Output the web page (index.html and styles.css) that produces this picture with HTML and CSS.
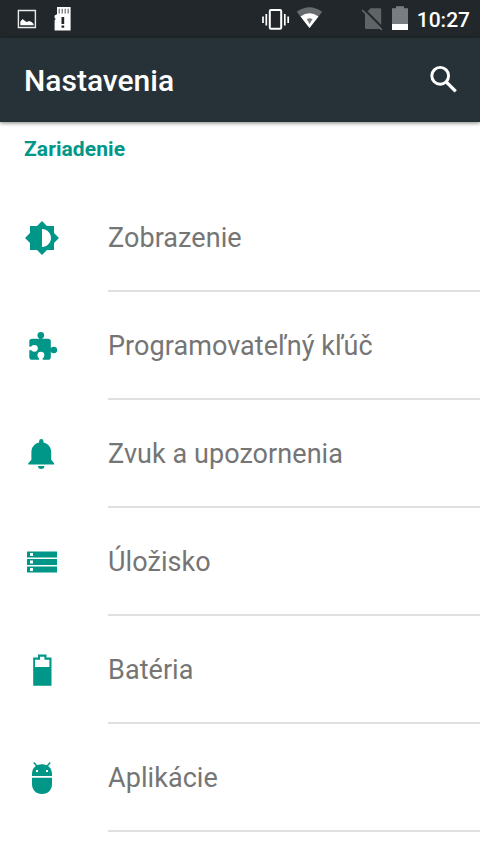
FILE: index.html
```html
<!DOCTYPE html>
<html lang="sk">
<head>
<meta charset="utf-8">
<title>Nastavenia</title>
<link rel="stylesheet" href="styles.css">
</head>
<body>
<div class="status">
  <svg class="status-left" width="84" height="38" viewBox="0 0 84 38">
    <path d="M18.4 10.5h17v17h-17z" fill="none" stroke="#e9eaea" stroke-width="1.4"/>
    <path d="M20.3 25.3v-3.600l2.200-2.600 1.600 1.200 2.400 1.700 2.700-1 2.400 1 2 2v1.300z" fill="#fff"/>
    <path d="M57 7h13.600v23.600H54.600V20.300l1.200-1.300-1.200-1V15.500l2.400-1.300z" fill="#fff"/>
    <path d="M59.200 8.700v4.800M62.200 8.700v4.800M65.200 8.700v4.800M68.200 8.700v4.800" stroke="#697074" stroke-width="1.200"/>
    <path d="M61.500 17h2.700v7h-2.700zM61.500 25.500h2.700v2.300h-2.700z" fill="#21272b"/>
  </svg>
  <div class="status-right">
    <svg width="154" height="38" viewBox="256 0 154 38">
      <rect x="269.800" y="10" width="11.400" height="18.800" rx="1.200" fill="none" stroke="#fff" stroke-width="2"/>
      <path d="M266.300 14v11.500M284.800 14v11.500" stroke="#fff" stroke-width="1.700"/>
      <path d="M263 16.500v6.500M288.200 16.500v6.500" stroke="#fff" stroke-width="1.700"/>
      <path d="M296.800 11.800Q309.500 2.500 322.200 11.800L309.500 28z" fill="#666b6e"/>
      <path d="M300.500 16.500Q309.500 9.800 318.500 16.500L309.500 28z" fill="#fff"/>
      <path d="M306.800 19.200Q309.500 17.400 312.500 19.200L309.600 24z" fill="#777b7e"/>
      <path d="M365 14l5.500-5.700h9.500q1.200 0 1.200 1.200V27.500q0 1.500-1.500 1.500h-13.200q-1.500 0-1.500-1.500z" fill="#5f6467"/>
      <path d="M363.800 9L383.800 29" stroke="#21272b" stroke-width="2.200"/>
      <path d="M362.300 10.200L382 29.900" stroke="#5f6467" stroke-width="1.700"/>
      <path d="M392 8.300h4V6.300h8v2h4V24h-16z" fill="#7a7d80"/>
      <path d="M392 24h16v6h-16z" fill="#fff"/>
    </svg>
    <span class="clock">10:27</span>
  </div>
</div>
<header class="appbar">
  <h1>Nastavenia</h1>
  <svg width="36" height="36" viewBox="0 0 36 36">
    <circle cx="14.200" cy="13.800" r="8.400" fill="none" stroke="#fff" stroke-width="2.900"/>
    <path d="M20.200 19.800l9.500 9.500" stroke="#fff" stroke-width="3.300"/>
  </svg>
</header>
<main>
  <h2>Zariadenie</h2>
  <ul>
    <li>
      <svg viewBox="0 0 24 24"><path d="M20 15.310L23.310 12 20 8.690V4h-4.690L12 .69 8.690 4H4v4.690L.69 12 4 15.310V20h4.690L12 23.310 15.310 20H20v-4.690zM12 18V6c3.310 0 6 2.690 6 6s-2.690 6-6 6z"/></svg>
      <span>Zobrazenie</span>
    </li>
    <li>
      <svg viewBox="0 0 36 36">
        <rect x="5.300" y="10.700" width="21.500" height="21" rx="2.800"/>
        <circle cx="16.800" cy="7.300" r="3.300"/><path d="M15.300 9h3v3h-3z"/>
        <circle cx="29.800" cy="22" r="3.300"/><path d="M26 20.500h3v3h-3z"/>
        <g class="cut"><circle cx="10.400" cy="20.300" r="3.400"/><path d="M4.500 18.600h5v3.600h-5z"/><circle cx="16.900" cy="27.200" r="3.400"/><path d="M15.100 28h3.600v4.500h-3.600z"/></g>
      </svg>
      <span>Programovateľný kľúč</span>
    </li>
    <li>
      <svg viewBox="0 0 36 36"><path d="M15.100 5.200a2.200 2.200 0 0 1 4.400 0v1.200c4.700 1.100 7.700 4.900 7.700 9.800v7.600l2.900 3.500v1.200H4.300v-1.200l3.100-3.500v-7.600c0-4.900 3-8.700 7.700-9.800zM14 30.100h6.400a3.200 2.900 0 0 1-6.400 0z"/></svg>
      <span>Zvuk a upozornenia</span>
    </li>
    <li>
      <svg viewBox="0 0 36 36">
        <path d="M3 7.400h30v6.200H3zM3 15h30v6H3zM3 22.400h30v6.200H3z"/>
        <path class="cut" d="M6 9h3v3H6zM6 16.500h3v3H6zM6 24h3v3H6z"/>
      </svg>
      <span>Úložisko</span>
    </li>
    <li>
      <svg viewBox="0 0 36 36"><path fill-rule="evenodd" d="M9.200 5.500H14V2.400h8.500v3.100h5v28.300H9.200zM11 7.700V15h14.400V7.700h-5V4.800H16v2.900z"/></svg>
      <span>Batéria</span>
    </li>
    <li>
      <svg viewBox="0 0 36 36">
        <path d="M8 16v-2C8 8 12 4.200 18 4.200S28 8 28 14v2zM8 17.800h20V24c0 6-4 10-10 10S8 30 8 24z"/>
        <path d="M9.800 2.500l3.700 4.200M26.200 2.500l-3.700 4.200" stroke="#009688" stroke-width="1.500"/>
        <path class="cut" d="M12 10h2v2h-2zM22 10h2v2h-2z"/>
      </svg>
      <span>Aplikácie</span>
    </li>
  </ul>
</main>
</body>
</html>
```
FILE: styles.css
```css
* { box-sizing: border-box; }
body {
  margin: 0;
  height: 854px;
  overflow: hidden;
  background: #fff;
  font-family: Roboto, "Liberation Sans", sans-serif;
}
svg { display: block; flex: none; }
.status {
  display: flex;
  justify-content: space-between;
  height: 38px;
  background: #21272b;
}
.status-right {
  display: flex;
  gap: 7px;
  padding-right: 10px;
}
.clock {
  color: #fff;
  font-size: 21px;
  font-weight: 500;
  line-height: 40px;
}
.appbar {
  position: relative;
  display: flex;
  align-items: center;
  justify-content: space-between;
  height: 84px;
  padding: 0 18px 0 24px;
  background: #273238;
  box-shadow: 0 1px 4px rgba(0, 0, 0, .5);
}
h1 {
  margin: 0;
  padding-top: 2px;
  color: #fff;
  font-size: 30px;
  font-weight: 500;
  line-height: 40px;
}
h2 {
  height: 62px;
  margin: 0;
  padding: 14px 24px 0;
  color: #009688;
  font-size: 21px;
  font-weight: 700;
  letter-spacing: .08px;
  line-height: 26px;
}
ul {
  margin: 0;
  padding: 0;
  list-style: none;
}
li {
  display: flex;
  align-items: center;
  gap: 48px;
  height: 108px;
  padding-left: 24px;
}
li svg {
  width: 36px;
  height: 36px;
  fill: #009688;
}
li .cut { fill: #fff; }
li span {
  flex: 1;
  height: 108px;
  border-bottom: 2px solid #e0e0e0;
  color: #757575;
  font-size: 27px;
  letter-spacing: .06px;
  line-height: 108px;
}
```
